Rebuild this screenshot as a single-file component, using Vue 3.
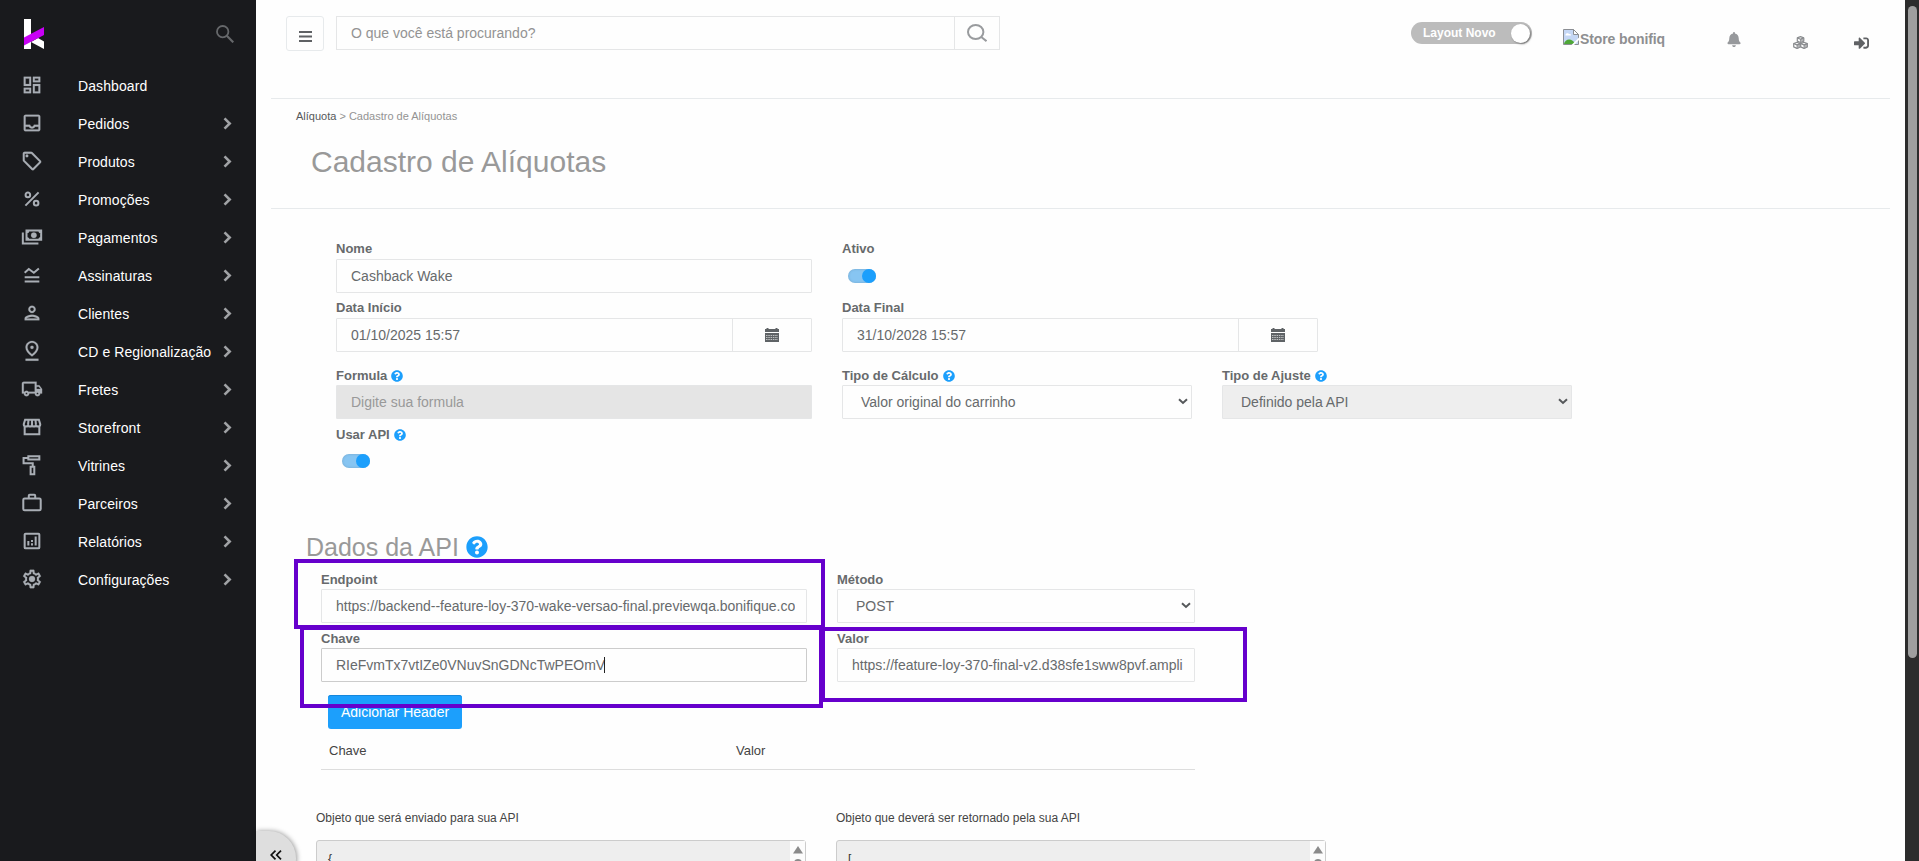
<template>
  <div class="page">
    <!-- menu lateral -->
    <aside class="sidebar">
      <div class="brand">
        <svg class="logo" viewBox="0 0 20 30">
          <path d="M0 0h7v30H0z" fill="#fff" />
          <path d="M7 23l7-4 6 3.500v7.500z" fill="#fff" />
          <path d="M0 18.500L20 8v8L0 26.500z" fill="#c800f5" />
        </svg>
        <svg class="brand-search" viewBox="0 0 18 18" fill="none" stroke="#66686b">
          <circle cx="6.700" cy="6.700" r="5.700" stroke-width="1.800" />
          <path d="M10.800 10.800l6.500 6.500" stroke-width="2.200" />
        </svg>
      </div>
      <nav>
        <a v-for="item in menu" :key="item.label" class="menu-item">
          <svg class="menu-icon" viewBox="0 0 24 24">
            <path v-if="item.fill" :d="item.fill" fill="currentColor" fill-rule="evenodd" stroke="currentColor" stroke-width=".25" />
            <path v-if="item.line" :d="item.line" fill="none" stroke="currentColor" stroke-width="2.200" />
          </svg>
          <span class="menu-label">{{ item.label }}</span>
          <svg v-if="item.label !== 'Dashboard'" class="chevron" viewBox="0 0 9 13">
            <path d="M1.500 1.300l5.200 5.200-5.200 5.200" fill="none" stroke="currentColor" stroke-width="2.600" />
          </svg>
        </a>
      </nav>
    </aside>

    <main class="content">
      <header class="topbar">
        <button class="menu-btn">
          <svg viewBox="0 0 13 11"><path d="M0 1h13M0 5.500h13M0 10h13" stroke="#5f6164" stroke-width="1.900" /></svg>
        </button>
        <div class="search">
          <div class="search-field">O que você está procurando?</div>
          <div class="search-btn">
            <svg viewBox="0 0 20 18" fill="none" stroke="#999b9e" stroke-width="2">
              <ellipse cx="8.700" cy="8" rx="7.700" ry="7" />
              <path d="M14 12.700l5.500 4.500" />
            </svg>
          </div>
        </div>
        <div class="layout-switch">Layout Novo<i></i></div>
        <div class="store">
          <svg class="broken" viewBox="0 0 16 16">
            <path d="M.5.5h10l5 5v10H.5z" fill="#c5d7f5" stroke="#8b8e93" />
            <path d="M10.500.5v5h5z" fill="#fff" stroke="#8b8e93" />
            <path d="M2.500 6c0-2 3-2.500 3.500-.8 1.500-.3 2 .3 2 1.300H2.500z" fill="#fff" />
            <path d="M1 15c1-6 9-6 11 0z" fill="#4fa738" />
            <path d="M8.500 16L16 8.500V11l-5 5z" fill="#fff" />
          </svg>
          <span>Store bonifiq</span>
        </div>
        <svg class="bell" viewBox="0 0 448 512"><path :d="icons.bell" fill="#97999c" /></svg>
        <svg class="cubes" viewBox="0 0 15 13" fill="#fff" stroke="#8b8d90" stroke-width="1.200" stroke-linejoin="round">
          <path d="M7.500.6l3.200 1.300v3.200L7.500 6.500 4.300 5.100V1.900z" />
          <path d="M4 6.300l3.300 1.300v3.300L4 12.400.7 10.900V7.600z" />
          <path d="M11 6.300l3.300 1.300v3.300L11 12.400l-3.300-1.500V7.600z" />
          <path d="M7.500 3.200l3.200-1.300v3.200L7.500 6.500zM4 8.900l3.300-1.300v3.300L4 12.400zM11 8.900l3.300-1.300v3.300L11 12.400z" fill="#b4b5b7" stroke-width=".8" />
          <path d="M4.300 1.900l3.200 1.300 3.200-1.300M.7 7.600L4 8.900l3.300-1.300M7.700 7.600L11 8.900l3.300-1.300" fill="none" />
        </svg>
        <svg class="sign" viewBox="0 64 512 384"><path :d="icons.sign" fill="#606265" /></svg>
      </header>

      <section class="title-area">
        <div class="breadcrumb"><b>Alíquota</b> &gt; Cadastro de Alíquotas</div>
        <h1>Cadastro de Alíquotas</h1>
      </section>

      <section class="form">
        <div class="row">
          <div class="field wide">
            <label>Nome</label>
            <div class="control">Cashback Wake</div>
          </div>
          <div class="field">
            <label>Ativo</label>
            <div class="toggle"></div>
          </div>
        </div>
        <div class="row">
          <div v-for="d in dates" :key="d.label" class="field wide">
            <label>{{ d.label }}</label>
            <div class="control date">
              <span>{{ d.value }}</span>
              <div class="calendar">
                <svg viewBox="0 0 14 14">
                  <path d="M0 1h1.500V0h2v1h7V0h2v1H14v3H0zM0 5h14v9H0z" fill="#5f6366" />
                  <path d="M1 7.500h12M1 9.500h12M1 11.500h12" stroke="#d9dadb" stroke-width=".8" stroke-dasharray="1.500 .8" />
                </svg>
              </div>
            </div>
          </div>
        </div>
        <div class="row spaced">
          <div class="field wide low">
            <label>Formula <svg class="help" viewBox="0 0 512 512"><path :d="icons.help" /></svg></label>
            <div class="control disabled">Digite sua formula</div>
          </div>
          <div v-for="s in selects" :key="s.label" class="field medium low">
            <label>{{ s.label }} <svg class="help" viewBox="0 0 512 512"><path :d="icons.help" /></svg></label>
            <div class="control select" :class="{ readonly: s.readonly }">
              {{ s.value }}
              <svg class="arrow" viewBox="0 0 10 7"><path d="M1 1.300l4 3.700 4-3.700" /></svg>
            </div>
          </div>
        </div>
        <div class="row">
          <div class="field wide low">
            <label>Usar API <svg class="help" viewBox="0 0 512 512"><path :d="icons.help" /></svg></label>
            <div class="toggle"></div>
          </div>
        </div>
      </section>

      <section class="api">
        <h2>Dados da API <svg class="help" viewBox="0 0 512 512"><path :d="icons.help" /></svg></h2>
        <div class="row">
          <div class="field key low">
            <label>Endpoint</label>
            <div class="control"><span class="clip">https://backend--feature-loy-370-wake-versao-final.previewqa.bonifique.co</span></div>
          </div>
          <div class="field val low">
            <label>Método</label>
            <div class="control select">
              POST
              <svg class="arrow" viewBox="0 0 10 7"><path d="M1 1.300l4 3.700 4-3.700" /></svg>
            </div>
          </div>
        </div>
        <div class="row">
          <div class="field key low">
            <label>Chave</label>
            <div class="control focused"><span>RIeFvmTx7vtIZe0VNuvSnGDNcTwPEOmV</span><i class="caret"></i></div>
          </div>
          <div class="field val low">
            <label>Valor</label>
            <div class="control"><span>https://feature-loy-370-final-v2.d38sfe1sww8pvf.ampli</span></div>
          </div>
        </div>
        <button class="add-btn">Adicionar Header</button>
        <div class="table-head">
          <span>Chave</span>
          <span>Valor</span>
        </div>
      </section>

      <section class="objects">
        <div v-for="o in objects" :key="o.label" class="object">
          <p>{{ o.label }}</p>
          <div class="code">
            <pre>{{ o.code }}</pre>
            <div class="code-scroll">
              <svg viewBox="0 0 10 8"><path d="M5 0l5 7.500H0z" fill="#8b8b8b" /></svg>
              <i></i>
            </div>
          </div>
        </div>
      </section>
    </main>

    <div class="scrollbar"><i></i></div>

    <!-- botão de recolher o menu -->
    <div class="collapse">
      <svg viewBox="0 0 12 10"><path d="M5.500.6L1.200 5l4.300 4.400M11 .6L6.700 5 11 9.400" fill="none" stroke="#111" stroke-width="1.700" /></svg>
    </div>

    <!-- marcações sobre os campos da API -->
    <div class="mark mark-endpoint"></div>
    <div class="mark mark-value"></div>
    <div class="mark mark-key"></div>
  </div>
</template>

<script setup>
const menu = [
  { label: 'Dashboard', fill: 'M19 5v2h-4V5h4M9 5v6H5V5h4m10 8v6h-4v-6h4M9 17v2H5v-2h4M21 3h-8v6h8V3zM11 3H3v10h8V3zm10 8h-8v10h8V11zm-10 4H3v6h8v-6z' },
  { label: 'Pedidos', fill: 'M19 3H5c-1.100 0-2 .9-2 2v14c0 1.100.9 2 2 2h14c1.100 0 2-.9 2-2V5c0-1.100-.9-2-2-2zm0 16H5v-3h3.560c.69 1.190 1.970 2 3.450 2s2.750-.81 3.450-2H19v3zm0-5h-4.990c0 1.100-.9 2-2 2s-2-.9-2-2H5V5h14v9z' },
  { label: 'Produtos', fill: 'M21.410 11.410l-8.830-8.830C12.210 2.210 11.700 2 11.170 2H4c-1.100 0-2 .9-2 2v7.170c0 .53.21 1.040.59 1.410l8.830 8.830c.78.78 2.050.78 2.830 0l7.170-7.170c.78-.78.78-2.040-.01-2.830zM12.830 20L4 11.170V4h7.170L20 12.830 12.830 20zM5 6.500a1.500 1.500 0 1 0 3 0a1.500 1.500 0 1 0-3 0z' },
  { label: 'Promoções', line: 'M4.800 19.200L19.200 4.800M5 7.500a2.500 2.500 0 1 0 5 0a2.500 2.500 0 1 0-5 0zM14 16.500a2.500 2.500 0 1 0 5 0a2.500 2.500 0 1 0-5 0z' },
  { label: 'Pagamentos', fill: 'M11 10a3 3 0 1 0 6 0a3 3 0 1 0-6 0z', line: 'M2 7v12h17M8 5h12c0 1.200.8 2 2 2v6c-1.200 0-2 .8-2 2H8c0-1.200-.8-2-2-2V7c1.200 0 2-.8 2-2zM6 5h16v10H6z' },
  { label: 'Assinaturas', line: 'M4 19h16M4 14.500h16M4 9.500l4.500-4 5.500 4 5.500-4.500' },
  { label: 'Clientes', fill: 'M12 6c1.100 0 2 .9 2 2s-.9 2-2 2-2-.9-2-2 .9-2 2-2m0 10c2.700 0 5.800 1.290 6 2H6c.23-.72 3.310-2 6-2m0-12C9.790 4 8 5.790 8 8s1.790 4 4 4 4-1.790 4-4-1.790-4-4-4zm0 10c-2.670 0-8 1.340-8 4v2h16v-2c0-2.660-5.330-4-8-4z' },
  { label: 'CD e Regionalização', fill: 'M12 3c1.930 0 5 1.400 5 5.150 0 2.160-1.720 4.670-5 7.320-3.280-2.650-5-5.170-5-7.320C7 4.400 10.070 3 12 3m0-2C8.730 1 5 3.460 5 8.150c0 3.120 2.330 6.410 7 9.850 4.670-3.440 7-6.730 7-9.850C19 3.460 15.270 1 12 1zM5 20.500h14v2H5zM10.200 8a1.800 1.800 0 1 0 3.600 0a1.800 1.800 0 1 0-3.600 0z' },
  { label: 'Fretes', fill: 'M20 8h-3V4H3c-1.100 0-2 .9-2 2v11h2c0 1.660 1.340 3 3 3s3-1.340 3-3h6c0 1.660 1.340 3 3 3s3-1.340 3-3h2v-5l-3-4zm-.5 1.500l1.960 2.500H17V9.500h2.500zM6 18c-.55 0-1-.45-1-1s.45-1 1-1 1 .45 1 1-.45 1-1 1zm2.220-3c-.55-.61-1.330-1-2.220-1s-1.670.39-2.220 1H3V6h12v9H8.220zM18 18c-.55 0-1-.45-1-1s.45-1 1-1 1 .45 1 1-.45 1-1 1z' },
  { label: 'Storefront', line: 'M4 11v9h16v-9M4.500 4h15L21 9c0 1.500-1 2.500-2.300 2.500S16.300 10.500 16.300 9.500c0 1-1 2-2.200 2S12 10.500 12 9.500c0 1-1 2-2.200 2S7.700 10.500 7.700 9.500c0 1-1 2-2.300 2S3 10.500 3 9zM8.200 4l-.5 5.500M12 4v5.500M15.800 4l.5 5.500' },
  { label: 'Vitrines', line: 'M8 2.500h12v3.500H8zM8 4.300H2.800V10h10v4M10.500 14h4v8h-4z' },
  { label: 'Parceiros', line: 'M4 7h16q1.500 0 1.500 1.500v10q0 1.500-1.500 1.500H4q-1.500 0-1.500-1.500v-10Q2.500 7 4 7zM8.500 7V4q0-1 1-1h5q1 0 1 1v3' },
  { label: 'Relatórios', line: 'M5 4h14q1 0 1 1v14q0 1-1 1H5q-1 0-1-1V5q0-1 1-1zM8 17v-5M12 17v-2.500M12 13v-2M16 17V7' },
  { label: 'Configurações', fill: 'M19.430 12.980c.04-.32.07-.64.07-.98 0-.34-.03-.66-.07-.98l2.110-1.650c.19-.15.24-.42.12-.64l-2-3.460c-.09-.16-.26-.25-.44-.25-.06 0-.12.01-.17.03l-2.490 1c-.52-.4-1.080-.73-1.690-.98l-.38-2.650C14.460 2.180 14.250 2 14 2h-4c-.25 0-.46.18-.49.42l-.38 2.650c-.61.25-1.170.59-1.690.98l-2.490-1c-.06-.02-.12-.03-.18-.03-.17 0-.34.09-.43.25l-2 3.460c-.13.22-.07.49.12.64l2.110 1.650c-.04.32-.07.65-.07.98 0 .33.03.66.07.98l-2.110 1.650c-.19.15-.24.42-.12.64l2 3.460c.09.16.26.25.44.25.06 0 .12-.01.17-.03l2.490-1c.52.4 1.080.73 1.690.98l.38 2.650c.03.24.24.42.49.42h4c.25 0 .46-.18.49-.42l.38-2.650c.61-.25 1.170-.59 1.690-.98l2.490 1c.06.02.12.03.18.03.17 0 .34-.09.43-.25l2-3.460c.12-.22.07-.49-.12-.64l-2.110-1.650zm-1.980-1.710c.04.31.05.52.05.73 0 .21-.02.43-.05.73l-.14 1.130.89.7 1.080.84-.7 1.210-1.270-.51-1.040-.42-.9.68c-.43.32-.84.56-1.250.73l-1.060.43-.16 1.130-.2 1.350h-1.400l-.19-1.350-.16-1.130-1.060-.43c-.43-.18-.83-.41-1.230-.71l-.91-.7-1.060.43-1.270.51-.7-1.210 1.080-.84.89-.7-.14-1.130c-.03-.31-.05-.54-.05-.74s.02-.43.05-.73l.14-1.130-.89-.7-1.080-.84.7-1.210 1.270.51 1.040.42.9-.68c.43-.32.84-.56 1.250-.73l1.060-.43.16-1.130.2-1.350h1.390l.19 1.350.16 1.130 1.060.43c.43.18.83.41 1.230.71l.91.7 1.060-.43 1.270-.51.7 1.210-1.070.85-.89.7.14 1.130zM8.700 12a3.300 3.300 0 1 0 6.600 0a3.300 3.300 0 1 0-6.600 0z' }
]

const dates = [
  { label: 'Data Início', value: '01/10/2025 15:57' },
  { label: 'Data Final', value: '31/10/2028 15:57' }
]

const selects = [
  { label: 'Tipo de Cálculo', value: 'Valor original do carrinho', readonly: false },
  { label: 'Tipo de Ajuste', value: 'Definido pela API', readonly: true }
]

const objects = [
  { label: 'Objeto que será enviado para sua API', code: '{' },
  { label: 'Objeto que deverá ser retornado pela sua API', code: '[' }
]

const icons = {
  bell: 'M224 512c35.320 0 63.970-28.650 63.970-64H160.030c0 35.350 28.650 64 63.970 64zm215.390-149.710c-19.320-20.760-55.470-51.990-55.470-154.290 0-77.700-54.480-139.900-127.940-155.160V32c0-17.670-14.320-32-31.980-32s-31.980 14.330-31.980 32v20.840C118.560 68.100 64.080 130.300 64.080 208c0 102.300-36.150 133.530-55.470 154.290-6 6.450-8.660 14.160-8.610 21.710.11 16.400 12.980 32 32.100 32h383.800c19.120 0 32-15.600 32.100-32 .05-7.550-2.610-15.270-8.610-21.710z',
  sign: 'M416 448h-84c-6.600 0-12-5.400-12-12v-40c0-6.600 5.400-12 12-12h84c17.700 0 32-14.300 32-32V160c0-17.700-14.300-32-32-32h-84c-6.600 0-12-5.400-12-12V76c0-6.600 5.400-12 12-12h84c53 0 96 43 96 96v192c0 53-43 96-96 96zm-47-201L201 79c-15-15-41-4.500-41 17v96H24c-13.300 0-24 10.700-24 24v96c0 13.300 10.700 24 24 24h136v96c0 21.500 26 32 41 17l168-168c9.300-9.400 9.300-24.600 0-34z',
  help: 'M504 256c0 136.997-111.043 248-248 248S8 392.997 8 256C8 119.083 119.043 8 256 8s248 111.083 248 248zM262.655 90c-54.497 0-89.255 22.957-116.549 63.758-3.536 5.286-2.353 12.415 2.715 16.258l34.699 26.310c5.205 3.947 12.621 3.008 16.665-2.122 17.864-22.658 30.113-35.797 57.303-35.797 20.429 0 45.698 13.148 45.698 32.958 0 14.976-12.363 22.667-32.534 33.976C247.128 238.528 216 254.941 216 296v4c0 6.627 5.373 12 12 12h56c6.627 0 12-5.373 12-12v-1.333c0-28.462 83.186-29.647 83.186-106.667 0-58.002-60.165-102-116.531-102zM256 338c-25.365 0-46 20.635-46 46 0 25.364 20.635 46 46 46s46-20.636 46-46c0-25.364-20.635-46-46-46z'
}
</script>

<style>
body {
  margin: 0;
  overflow: hidden;
}
</style>

<style scoped>
.page {
  position: relative;
  display: flex;
  height: 861px;
  overflow: hidden;
  background: #fefefe;
  color: #676a6c;
  font-family: "Liberation Sans", Arial, sans-serif;
  font-size: 14px;
}

.page * {
  box-sizing: border-box;
}

svg {
  display: block;
  flex: none;
}

/* menu lateral */
.sidebar {
  flex: none;
  width: 256px;
  background: #191a1d;
}

.brand {
  display: flex;
  justify-content: space-between;
  align-items: flex-start;
  height: 67px;
  padding: 19px 22px 0 24px;
}

.logo {
  width: 20px;
  height: 30px;
}

.brand-search {
  width: 18px;
  height: 18px;
  margin-top: 6px;
}

.menu-item {
  display: flex;
  align-items: center;
  height: 38px;
  padding: 0 24px 0 21px;
  color: #fff;
}

.menu-icon {
  width: 22px;
  height: 22px;
  margin-top: -2px;
  color: #a9aeb5;
}

.menu-label {
  flex: 1;
  margin-left: 35px;
  letter-spacing: .09px;
  white-space: nowrap;
}

.chevron {
  width: 9px;
  height: 13px;
  margin-top: -1px;
  color: #a0a2a5;
}

/* conteúdo */
.content {
  flex: 1;
  min-width: 0;
  padding: 0 15px;
}

.topbar {
  display: flex;
  align-items: flex-start;
  height: 99px;
  padding: 16px 21px 0 15px;
  border-bottom: 1px solid #e7eaec;
}

.menu-btn {
  display: flex;
  align-items: center;
  justify-content: center;
  width: 38px;
  height: 35px;
  padding: 5px 0 0;
  border: 1px solid #e7eaec;
  border-radius: 3px;
  background: #fefefe;
}

.menu-btn svg {
  width: 13px;
  height: 11px;
}

.search {
  display: flex;
  width: 664px;
  height: 34px;
  margin-left: 12px;
  border: 1px solid #e5e6e7;
}

.search-field {
  flex: 1;
  padding-left: 14px;
  color: #939393;
  line-height: 33px;
}

.search-btn {
  width: 45px;
  padding: 7px 0 0 12px;
  border-left: 1px solid #e5e6e7;
}

.search-btn svg {
  width: 20px;
  height: 18px;
}

.layout-switch {
  display: flex;
  align-items: center;
  justify-content: space-between;
  width: 121px;
  height: 22px;
  margin: 6px 0 0 411px;
  padding: 0 2px 0 12px;
  border-radius: 11px;
  background: #bcbcbc;
  color: #fff;
  font-size: 12px;
  font-weight: bold;
}

.layout-switch i {
  width: 19px;
  height: 19px;
  border-radius: 50%;
  background: #fff;
  box-shadow: 1px 1px 2px #777;
}

.store {
  display: flex;
  width: 164px;
  margin: 13px 0 0 31px;
  color: #8e8f91;
  font-weight: bold;
  letter-spacing: -.1px;
  line-height: 20px;
}

.broken {
  width: 16px;
  height: 16px;
  margin-right: 1px;
}

.bell {
  width: 14px;
  height: 15px;
  margin-top: 16px;
}

.cubes {
  width: 15px;
  height: 13px;
  margin: 20px 0 0 52px;
}

.sign {
  width: 15px;
  height: 12px;
  margin: 21px 0 0 46px;
}

.title-area {
  height: 110px;
  padding: 10px 25px 0;
  border-bottom: 1px solid #e7eaec;
}

.breadcrumb {
  color: #939393;
  font-size: 11px;
  line-height: 15px;
}

.breadcrumb b {
  color: #55585a;
  font-weight: normal;
}

h1 {
  margin: 20px 0 0 15px;
  color: #999;
  font-size: 30px;
  font-weight: normal;
  line-height: 36px;
}

/* formulário */
.form {
  height: 311px;
  padding: 31px 0 0 65px;
}

.row {
  display: flex;
  gap: 30px;
  margin-bottom: 6px;
}

.row.spaced {
  margin-top: 14px;
}

.field label {
  display: flex;
  align-items: center;
  gap: 4px;
  height: 19px;
  padding-bottom: 2px;
  font-size: 13px;
  font-weight: bold;
  line-height: 17px;
}

.field.low label {
  padding-bottom: 0;
}

.help {
  width: 12px;
  height: 12px;
  fill: #1c9ffc;
}

.wide {
  width: 476px;
}

.medium {
  width: 350px;
}

.control {
  display: flex;
  align-items: center;
  height: 34px;
  padding: 0 11px 1px 14px;
  border: 1px solid #e5e6e7;
  border-radius: 1px;
  white-space: nowrap;
}

.control.date {
  justify-content: space-between;
  padding-right: 0;
}

.calendar {
  display: flex;
  align-items: center;
  justify-content: center;
  width: 79px;
  height: 32px;
  border-left: 1px solid #e5e6e7;
}

.calendar svg {
  width: 14px;
  height: 14px;
}

.control.disabled {
  background: #e5e5e5;
  color: #999;
}

.control.select {
  justify-content: space-between;
  padding: 0 3px 1px 18px;
}

.control.readonly {
  background: #eee;
}

.arrow {
  width: 10px;
  height: 7px;
  fill: none;
  stroke: #55585a;
  stroke-width: 2;
}

.control.focused {
  border-color: #ccc;
}

.toggle {
  display: flex;
  justify-content: flex-end;
  width: 28px;
  height: 14px;
  margin: 10px 0 0 6px;
  border-radius: 7px;
  background: #87c5f2;
  box-shadow: inset 0 0 3px rgba(0, 0, 0, .15);
}

.toggle::after {
  content: "";
  width: 14px;
  height: 14px;
  border-radius: 50%;
  background: #1c9ffc;
}

/* dados da API */
.api {
  height: 281px;
  padding: 10px 0 0 50px;
}

h2 {
  display: flex;
  align-items: center;
  gap: 7px;
  height: 34px;
  margin: 0 0 6px -15px;
  color: #999;
  font-size: 25px;
  font-weight: normal;
}

h2 .help {
  width: 22px;
  height: 22px;
}

.key {
  width: 486px;
}

.val {
  width: 358px;
}

.clip {
  overflow: hidden;
  letter-spacing: -.01px;
}

.caret {
  width: 1px;
  height: 16px;
  margin-left: -1px;
  background: #222;
}

.add-btn {
  display: block;
  width: 134px;
  height: 34px;
  margin: 13px 0 0 7px;
  padding: 0;
  border: 0;
  border-radius: 3px;
  background: #1c9ffc;
  box-shadow: inset 0 1px 0 #1587dc;
  color: #fff;
  font: 14px "Liberation Sans", Arial, sans-serif;
}

.table-head {
  display: flex;
  width: 874px;
  height: 41px;
  padding: 14px 8px 0;
  border-bottom: 1px solid #ddd;
  color: #444;
  font-size: 13px;
  line-height: 15px;
}

.table-head span {
  width: 407px;
}

.objects {
  display: flex;
  gap: 30px;
  padding: 7px 0 0 45px;
}

.object {
  width: 490px;
}

.object p {
  margin: 0;
  height: 32px;
  color: #444;
  font-size: 12px;
  line-height: 20px;
}

.code {
  display: flex;
  justify-content: space-between;
  height: 150px;
  border: 1px solid #ccc;
  border-radius: 3px;
  background: #eee;
}

.code pre {
  margin: 9px 0 0 11px;
  color: #333;
  font: 12px/18px "Liberation Sans", Arial, sans-serif;
}

.code-scroll {
  display: flex;
  flex-direction: column;
  align-items: center;
  width: 15px;
  background: #fcfcfc;
}

.code-scroll svg {
  width: 10px;
  height: 8px;
  margin-top: 5px;
}

.code-scroll i {
  width: 8px;
  height: 60px;
  margin-top: 5px;
  border-radius: 4px;
  background: #8b8b8b;
}

/* barra de rolagem da página */
.scrollbar {
  flex: none;
  width: 14px;
  padding: 6px 3px;
  background: #2c2c2c;
}

.scrollbar i {
  display: block;
  width: 9px;
  height: 652px;
  border-radius: 5px;
  background: #9f9f9f;
}

.collapse {
  position: absolute;
  left: 256px;
  top: 831px;
  width: 40px;
  height: 54px;
  padding: 19px 0 0 14px;
  border-radius: 0 27px 27px 0;
  background: #dedede;
  box-shadow: 1px 0 5px rgba(0, 0, 0, .4);
}

.collapse svg {
  width: 12px;
  height: 10px;
}

.mark {
  position: absolute;
  border: 4px solid #6600cc;
}

.mark-endpoint {
  left: 294px;
  top: 559px;
  width: 531px;
  height: 70px;
}

.mark-key {
  left: 300px;
  top: 626px;
  width: 523px;
  height: 82px;
}

.mark-value {
  left: 821px;
  top: 627px;
  width: 426px;
  height: 75px;
}
</style>
